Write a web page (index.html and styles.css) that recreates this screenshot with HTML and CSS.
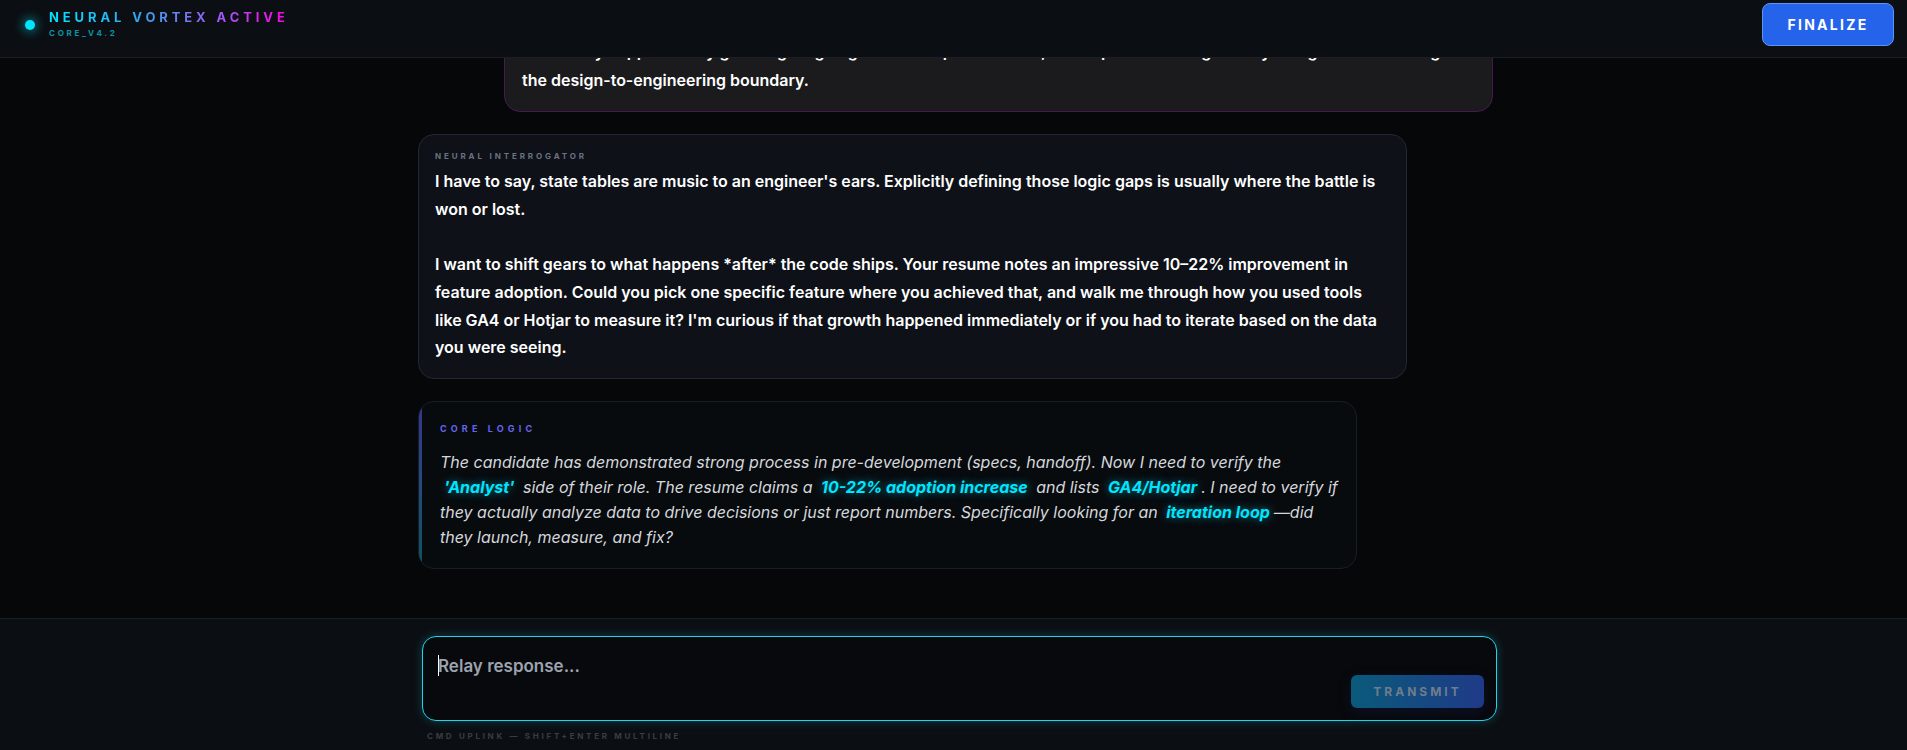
FILE: index.html
```html
<!DOCTYPE html>
<html lang="en">
<head>
<meta charset="utf-8">
<title>Neural Vortex</title>
<link rel="stylesheet" href="styles.css">
</head>
<body>
<div class="app">
  <header class="header">
    <div class="brand">
      <span class="pulse"></span>
      <div class="brand-text">
        <div class="brand-title">NEURAL VORTEX ACTIVE</div>
        <div class="brand-sub">CORE_V4.2</div>
      </div>
    </div>
    <button class="finalize">FINALIZE</button>
  </header>

  <main class="main">
    <div class="thread">
      <div class="msg msg-user">
        <div class="msg-label">CANDIDATE</div>
        <div class="msg-body user-body">For the checkout redesign I wrote a full spec covering every interaction, then paired with the lead engineer during handoff so nothing was lost in translation. I also built a state table for each component, default, hover, loading, empty and error, so engineers never had to guess.<br><span class="nw">It naturally supported my goal of giving engineers one place to look, and kept me working closely alongside them along</span><br>the design-to-engineering boundary.</div>
      </div>

      <div class="msg msg-ai">
        <div class="msg-label">NEURAL INTERROGATOR</div>
        <div class="msg-body pre">I have to say, state tables are music to an engineer's ears. Explicitly defining those logic gaps is usually where the battle is won or lost.

I want to shift gears to what happens *after* the code ships. Your resume notes an impressive 10–22% improvement in feature adoption. Could you pick one specific feature where you achieved that, and walk me through how you used tools like GA4 or Hotjar to measure it? I'm curious if that growth happened immediately or if you had to iterate based on the data you were seeing.</div>
      </div>

      <div class="logic">
        <div class="logic-label">CORE LOGIC</div>
        <div class="logic-body">The candidate has demonstrated strong process in pre-development (specs, handoff). Now I need to verify the <span class="hl">'Analyst'</span> side of their role. The resume claims a <span class="hl">10-22% adoption increase</span> and lists <span class="hl">GA4/Hotjar</span>. I need to verify if they actually analyze data to drive decisions or just report numbers. Specifically looking for an <span class="hl">iteration loop</span>—did they launch, measure, and fix?</div>
      </div>
    </div>
  </main>

  <footer class="footer">
    <div class="composer">
      <div class="input-box">
        <span class="caret"></span>
        <textarea class="input" placeholder="Relay response..."></textarea>
        <button class="transmit">TRANSMIT</button>
      </div>
      <div class="hint">CMD UPLINK — SHIFT+ENTER MULTILINE</div>
    </div>
  </footer>
</div>
</body>
</html>
```
FILE: styles.css
```css
* { box-sizing: border-box; }
html, body { margin: 0; padding: 0; }
body {
  background: #060709;
  font-family: Inter, "Noto Sans", "Liberation Sans", sans-serif;
  color: #f3f4f6;
}
.app {
  height: 750px;
  display: flex;
  flex-direction: column;
  overflow: hidden;
}

/* Header */
.header {
  height: 58px;
  flex-shrink: 0;
  display: flex;
  justify-content: space-between;
  align-items: flex-start;
  padding: 3px 13px 0 25px;
  background: #0b0f13;
  border-bottom: 1px solid #1a1f26;
  position: relative;
  z-index: 2;
}
.brand {
  display: flex;
  align-items: center;
  gap: 14px;
  margin-top: 6px;
}
.pulse {
  width: 10px;
  height: 10px;
  border-radius: 50%;
  background: #00e5ff;
  box-shadow: 0 0 10px 3px rgba(0, 229, 255, 0.35);
  margin-top: 3px;
}
.brand-title {
  font-size: 13px;
  line-height: 16px;
  font-weight: 700;
  letter-spacing: 0.3em;
  background: linear-gradient(90deg, #00e5ff 0%, #3aa0f0 40%, #a855f7 72%, #ff00e6 100%);
  -webkit-background-clip: text;
  background-clip: text;
  color: transparent;
}
.brand-sub {
  margin-top: 3px;
  font-size: 8px;
  line-height: 10px;
  font-weight: 700;
  letter-spacing: 0.34em;
  color: #0e93a3;
}
.finalize {
  height: 43px;
  width: 132px;
  border-radius: 8px;
  border: 1px solid #5b95f5;
  background: #2563eb;
  color: #ffffff;
  font-family: Inter, "Liberation Sans", sans-serif;
  font-size: 14px;
  font-weight: 700;
  letter-spacing: 0.16em;
  padding: 0;
}

/* Main thread */
.main {
  flex: 1;
  min-height: 0;
  overflow: hidden;
  display: flex;
  flex-direction: column;
  justify-content: flex-end;
  padding: 0 0 49px 4px;
  background: #060709;
}
.thread {
  flex-shrink: 0;
  width: 1075px;
  margin: 0 auto;
  display: flex;
  flex-direction: column;
  gap: 22px;
}
.msg {
  width: 92%;
  border-radius: 16px;
  padding: 15px 16px 16px 16px;
}
.msg-user {
  align-self: flex-end;
  background: #1b1b1e;
  border: 1px solid #471a4f;
  padding-left: 17px;
}
.msg-ai {
  align-self: flex-start;
  background: #0e1118;
  border: 1px solid #23272f;
}
.msg-label {
  font-size: 8px;
  line-height: 12px;
  font-weight: 700;
  letter-spacing: 0.36em;
  color: #6b7280;
  margin-bottom: 6px;
}
.msg-body {
  font-size: 16px;
  line-height: 27.7px;
  font-weight: 600;
  color: #ffffff;
}
.msg-body.user-body {
  line-height: 29px;
}
.msg-body.pre {
  white-space: pre-wrap;
}
.nw {
  white-space: nowrap;
}

.logic {
  align-self: flex-start;
  position: relative;
  width: 939px;
  background: #080b0e;
  border: 1px solid #1a1d23;
  border-radius: 16px;
  padding: 21px 14px 18px 21px;
  overflow: hidden;
}
.logic::before {
  content: "";
  position: absolute;
  left: 0;
  top: 0;
  bottom: 0;
  width: 3px;
  background: linear-gradient(180deg, #3f3fb0 0%, #2a5a9a 50%, #0e6470 100%);
  opacity: 0.8;
}
.logic-label {
  font-size: 9px;
  line-height: 12px;
  font-weight: 700;
  letter-spacing: 0.46em;
  color: #6366f1;
  margin-bottom: 15px;
}
.logic-body {
  font-size: 16px;
  line-height: 25px;
  font-style: italic;
  color: #d4d7dc;
}
.hl {
  color: #00e5ff;
  font-weight: 700;
  padding: 0 4px;
  text-shadow: 0 0 10px rgba(0, 229, 255, 0.55);
}

/* Footer */
.footer {
  height: 132px;
  flex-shrink: 0;
  background: #0b0f13;
  border-top: 1px solid #1a1f26;
  padding: 17px 0 0 12px;
}
.composer {
  width: 1075px;
  margin: 0 auto;
}
.input-box {
  position: relative;
  height: 85px;
  display: flex;
  align-items: flex-end;
  gap: 12px;
  padding: 12px 12px 12px 15px;
  background: #07090c;
  border: 1px solid #22d3ee;
  border-radius: 14px;
  box-shadow: 0 0 10px rgba(34, 211, 238, 0.25);
}
.input {
  flex: 1;
  align-self: stretch;
  background: transparent;
  border: none;
  outline: none;
  resize: none;
  padding: 5px 0 0 0;
  font-family: Inter, "Liberation Sans", sans-serif;
  font-size: 17px;
  line-height: 24px;
  font-weight: 600;
  color: #e5e7eb;
}
.input::placeholder {
  color: #9ca3af;
}
.caret {
  position: absolute;
  left: 15px;
  top: 18px;
  width: 1px;
  height: 21px;
  background: #ffffff;
}
.transmit {
  width: 133px;
  height: 33px;
  flex-shrink: 0;
  border: none;
  border-radius: 6px;
  background: linear-gradient(90deg, #0a5a7a 0%, #1f3a88 100%);
  color: #6f7d8c;
  font-family: Inter, "Liberation Sans", sans-serif;
  font-size: 12px;
  font-weight: 700;
  letter-spacing: 0.25em;
  padding: 0;
  box-shadow: 0 4px 14px rgba(30, 40, 120, 0.25);
}
.hint {
  margin: 9px 0 0 5px;
  font-size: 8px;
  line-height: 12px;
  font-weight: 700;
  letter-spacing: 0.34em;
  color: #383d45;
}
```
